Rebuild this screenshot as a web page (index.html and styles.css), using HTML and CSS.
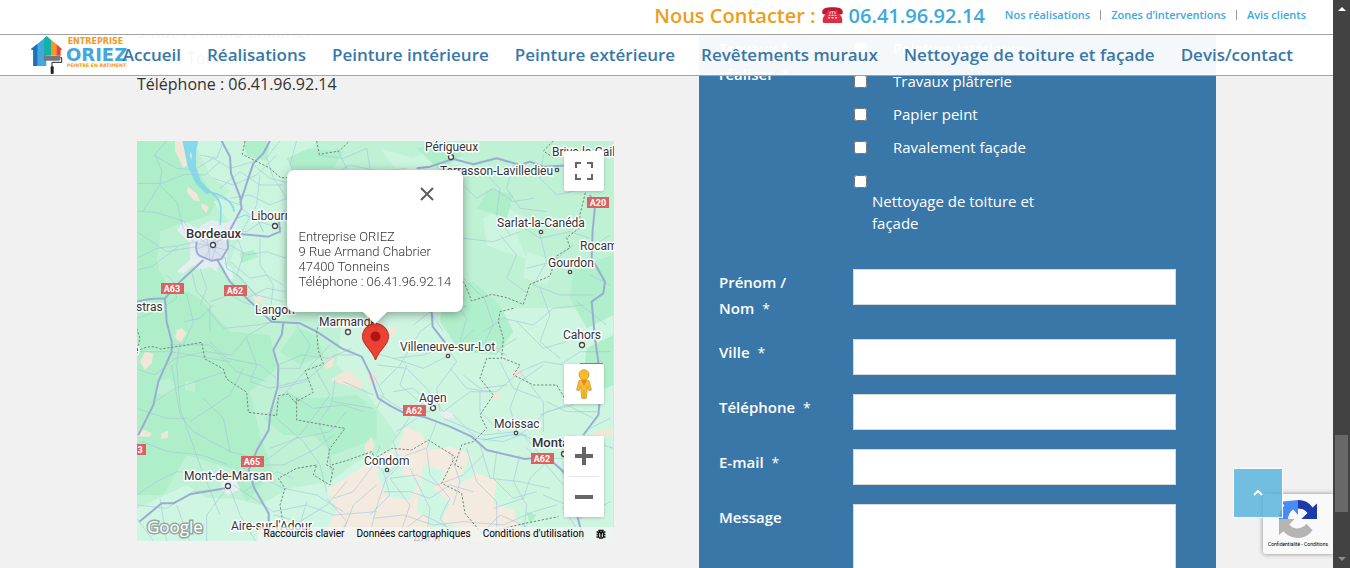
FILE: index.html
```html
<!DOCTYPE html>
<html lang="fr">
<head>
<meta charset="utf-8">
<meta name="viewport" content="width=device-width, initial-scale=1">
<title>Entreprise ORIEZ - Contact</title>
<link rel="stylesheet" href="styles.css">
</head>
<body>
<div class="page">
  <div class="view">
    <header class="header">
      <div class="topbar">
        <p class="contact"><span class="contact-label">Nous Contacter :</span>
          <svg class="phone-icon" viewBox="0 0 60 46" aria-hidden="true"><path fill="#be1931" d="M1 19C-2 6 8 1 30 1s32 5 29 18c-1 4-17 4-18-1v-4c-6-2-16-2-22 0v4c-1 5-17 5-18 1z"/><path fill="#dd2e44" d="M16 12c0-5 5-5 5 0v2h18v-2c0-5 5-5 5 0 1 6 14 13 14 24v5c0 5-2 5-6 5H8c-4 0-6 0-6-5v-5c0-11 13-18 14-24z"/><path fill="#f8dde0" d="M21 15h4v4h-4zm7 0h4v4h-4zm7 0h4v4h-4zm-16 7h5v4h-5zm8 0h6v4h-6zm9 0h5v4h-5zm-19 7h6v4h-6zm10 0h6v4h-6zm10 0h6v4h-6z"/></svg>
          <a class="contact-number" href="tel:0641969214">06.41.96.92.14</a></p>
        <nav class="quick" aria-label="Liens rapides"><a href="#">Nos réalisations</a><a href="#">Zones d’interventions</a><a href="#">Avis clients</a></nav>
      </div>
      <div class="mainbar">
        <a class="logo" href="#" aria-label="Entreprise ORIEZ">
          <svg viewBox="90 105 300 120" width="100" height="40">
            <path fill="#42a7df" d="M92 148l47-38v88H99v-48z"/><path fill="#1c73b4" d="M92 148l20-16v66H100v-48z"/>
            <path fill="#12b3a6" d="M132 115l8-7 13 11v48h-21z"/><path fill="#f39b18" d="M153 119l16 13v35h-16z"/><path fill="#e04a2d" d="M169 132l19 17h-6v18h-13z"/>
            <path fill="#777" d="M131 168h50v11l-3 3h-44l-3-3z"/><path fill="none" stroke="#26282a" stroke-width="3" d="M181 173h4v14h-29v14"/><rect x="152" y="199" width="9" height="23" rx="3" fill="#222"/>
            <text class="logo-top" x="203" y="132">ENTREPRISE</text><text class="logo-name" x="198" y="183">ORIEZ</text><text class="logo-sub" x="201" y="202">PEINTRE EN BATIMENT</text>
          </svg>
        </a>
        <nav class="menu" aria-label="Menu principal"><a href="#">Accueil</a><a href="#">Réalisations</a><a href="#">Peinture intérieure</a><a href="#">Peinture extérieure</a><a href="#">Revêtements muraux</a><a href="#">Nettoyage de toiture et façade</a><a href="#">Devis/contact</a></nav>
      </div>
    </header>

    <main class="content">
      <section class="info">
        <address>9 Rue Armand Chabrier<br>47400 Tonneins<br>Téléphone : 06.41.96.92.14</address>
        <div class="map">
          <svg class="tiles" viewBox="0 0 477 400" preserveAspectRatio="xMidYMid slice" aria-label="Carte">
            <rect width="477" height="400" fill="#bff1d5"/>
            <g transform="translate(-7 -6) scale(.33333)">
              <path fill="#aeefca" d="M20 18H160L205 110 260 195 240 240 150 270 95 290 80 380 130 440 220 500 300 590 420 600 440 700 360 770 390 900 430 1010 350 1100 300 1000 170 960 100 1080 20 1080z"/>
              <path fill="#ccf5df" d="M190 18H560L520 90 590 170 470 240 460 420 470 540 420 540 330 430 300 380 330 300 250 200 300 170 240 120z"/>
              <path fill="#bdf1d4" d="M90 290l60-25 30 35 20 60-50 60 30 50-50 5-45-70zM270 540l40-20 20 30-30 25zM80 740l40-10 20 30-30 20-35-5zM165 740l30 0v30l-30-5z"/>
              <path fill="#b0efcb" d="M330 355l40-10 15 20-50 20zM340 18l80 0-10 60-60-15zM470 70l70-30 100 10-30 50-120 10zM500 580l60 20 20 60-70 30-60-40z"/>
              <path fill="#cff6e2" d="M20 1120l150-70 60 40 80 0 80 20 90-50 120-20 80-60 100-40v950H20z"/>
              <path fill="#cdf5e0" d="M640 520H1450V1250H700L710 1060 800 900 700 760 620 690z"/>
              <path fill="#b0efcb" d="M560 790l120-10 60 50 0 80-130 50-60-60-90 0-60-50 60-70zM940 470l90-30 80 70 40 80-50 70-110-10-60-90zM1330 400l120-40v180l-80 40-50-90z"/>
              <path fill="#cbf5df" d="M1060 250l60-40 70 40-30 50 30 70-70-20-50-20zM750 40l100 30 80-40 100 60-70 60-150-30zM1190 350l90 30-30 70-70-20zM880 580l60 20 30 60-80 30-40-50z"/>
              <path fill="#aeefca" d="M860 40l90-22 50 40-70 50zM1080 160l70 20-20 70-90-30zM1370 640l80-40v150l-50 20-40-50zM1260 1400l40 0 10 60-40-20zM1190 1130l30 10-20 30z"/>
              <path fill="#b8f0d0" d="M550 220l190-30 50 40-40 80 60 40v150l-120 60-120-20z"/>
              <path fill="#f1e6d8" d="M135 18h25l15 70-15 10-25-50zM175 155l25 20 10 25-20-5-20-25zM215 205l20 10-5 20-15-15zM140 585l15-5 15 15-20 30-15-20zM45 650l25 5-5 30-20 20-15-25zM30 880l35 15-5 10h-35zM95 895l20-8-2 22-20 3zM370 480l25 5 10 15-30 5zM580 690l22-26 10 8-4 22-18 8zM610 728l38-22 24 14 26 20-2 24-50-14-44-14zM710 716l24-2 12 28-26 6zM770 590l24-20 10 14-36 34zM705 930l20-26 8 30-14 24-14-6zM1140 710l24-8 16 16-28 14zM1084 780l22-8 8 16-24 8zM1390 890l60-10v20l-60 5zM1380 1090l35-30 0 70z"/>
              <path fill="#f4ebe0" d="M745 965l60-25 20-65 50 20 25 50 60-10 60 20 20 60 60 20-10 70 60 20 20 50-30 60 80 60 10 50-80 20-50 60-90 0-80-60-80-30-60-70-40 30-60 80-20-80-60-40-20-70 30-60-30-60z"/>
              <path fill="#cff6e2" d="M790 950l50 20-30 45 60 20-30 60-70-10-30-70zM880 990l70 20-40 50 50 40-30 70-70-40zM1020 960l20 60-60 30zM900 1150l90 30-30 50-70-20z"/>
              <path fill="#e3edf0" d="M215 270l30-15 40 10 30-15 10 20-30 30-5 80-30 20 5 15-25-20-30 10-30-20 0-60-40-40 20-25 45 20z"/><path fill="#dbe2ee" d="M215 305l40-8 30 20 5 30-30 30-45-10-15-30z"/><path fill="#e8eff0" d="M180 375l40-10-60 50-20-5zM275 380l30 20 5 30-15 5zM275 1040l40-8 15 30-35 18-20-15zM770 455l20 5-15 20zM925 830l30 0 20 15-30 8z"/>
            </g>
            <g class="water" transform="translate(-7 -6) scale(.33333)"><path d="M160 18h42l-6 30 0 50 14 40 30 34-10 3-30-30-24-50z"/><path fill="none" d="M225 160q45 25 48 60l-2 50M235 170q70 15 78 60"/><path class="stream" d="M285 365l5 35 40 25 50 60M320 250l25-10 15 5 25 15 15 30M1060 915l80-15 50 0"/><path fill="#ccf5df" d="M180 40l8 20-3 25-8-20z"/></g>
            <g class="minor" transform="translate(-7 -6) scale(.33333)">
              <path d="M20 145l75 0 70-27 60 2 45-40M110 18l-35 40 20 50-5 40-50 80M20 228l60 5 80 25 45 60M70 60l70 40 60 5M90 150l50 50 20 80 30 40M20 370l60-30 65-8 55-12M20 290l90 60 90-15M145 335l-80 60-45 10M130 440l10 50-60 40-60 20M110 420l60 60 20 80-30 70M185 410l15 60 40 40 0 80M200 100l50-30 50 30 70-20M210 60l50 10 20-50M250 130l60 20 70-30 60-60M270 160l60-50 60 40 70 0M300 190l60-10 60 30 50-20M335 220l50 40 70 20M290 290l60 0 90-60M300 330l50 30 60-10 60 20M320 300l20 60-20 60 60 60 80 20M300 380l60 50 50-10 50 30M390 310l0 80 40 60-10 90M350 490l60-30 60 10M240 500l60-20 60 30M230 520l50 60 100-10 50-10M160 560l50-10 40-40"/>
              <path d="M330 210l-80-30-60-50M370 90l50 40 80 20 90-20M390 120l-10 90-45 80M450 18l-40 50 20 60 40 60 10 50M500 18l-20 70 40 80 60 20M560 60l80 10 70-30M590 130l70-40 90 20 80-10M620 40l30 60 0 80M710 40l10 60"/>
              <path d="M210 400l20 60-20 50M425 560l-70 40-50 60-80-10-90 20-60 50-60-20M500 570l40 60-30 70-60 0M350 610l30 80-20 50 60 20 120-30M240 620l50 50 100 20 50 40M120 630l120 0 80 80 90 30M20 650l100 0 180 30M150 620l-10 70 10 130 60 170 60 150M125 690l25 150 40 50 110 60 80 20M180 860l120-80 40-80M20 820l90 30 60 0M75 800l60-40 150-50M300 950l-20-100-60-60M35 920l80 30 100 10 80 30"/>
              <path d="M445 760l80-20 90-80 60 0M445 690l70-30 80 10 70-30M470 770l80 50 90-10 60 20M550 690l50 90-90 120-80 60-60 40M440 850l80 70 50 70 20 80M420 940l80-30 100-20 50-60M615 735l-10 70-40 60 30 70 10 80M640 740l90 40M610 800l120 20M440 800l160-170"/>
              <path d="M20 1080l60-40 60-30 150 10 80-30 90 0 100-50 50-40M20 1110l90 10 80-50 80-5M20 1150l60 80M90 1090l20 130M140 1110l40 110M290 1060l-60 80 0 80M300 1060l30 80 60 100M310 1050l120 80 100-20 80 30 130-10M400 1030l60 30 100 20 80 50M340 1070l100-60 50 20M430 1140l80 20 80-50 60-70M440 1180l110 0 90 20 80 0M590 1090l60 70-30 60M530 1100l-20 70 30 50M610 1090l60-20 60-80 20-60M700 950l60 60 20 70-60 60"/>
              <path d="M730 455l110 70 90-20 80 10M840 420l100 30 60-20 60 60M760 330l80 50 90-10 70-60 90 10 80-30M860 250l60 40 10 80 50 40 20 80M820 160l40 90-30 70M930 130l30 80-20 60 60 40M980 130l60 60 50-30 60 40 60-10M1050 100l60 60-10 80 40 60M1150 90l-20 70 40 60 80 10M1240 60l-10 70 50 50 90-20M1170 270l60 40 90-20 60 20M1110 300l50 60-30 70 70 50M1230 300l20 80-40 70 80 30 100 0M1330 330l-60 50-80 20M1380 420l60 30M1360 510l-90 10-60 50-90-20-60 40M1060 480l30 90-30 60 70 30M940 460l70 90-20 70M850 570l50-40 40 60M880 360l20 80 80 20M1380 340l60-40M760 230l60-50 50 20M1230 460l30 80-30 80 60 50M1340 500l90 70M1160 560l80 80 70-20"/>
              <path d="M720 650l70 20 90-10 80-30 80 20 70-10 50-30M740 690l90 10 60 60 50 70M750 750l60-60 60-100 40-30M790 670l90 30 70-35 80-80M930 830l-10-70 60-80-20-30M920 820l-70-60-60 10M940 830l80-60 80 0 70-60 70-30 60 10M940 850l120 50 100-10 60 30M970 840l70 70 80 10 50-20 80-70 80-20M1160 890l-20-70 30-80 70-50M1180 900l60 70 60 0M1050 770l0 60 60 60M1000 720l50 40 80-10M1250 800l60 30 90 0M1170 710l70 90 0 90M1290 690l60-40 90 0M1110 680l40 80 80 30M850 830l-60 90 20 70-40 40M860 850l-60 40M960 700l50 60 70 10M750 780l60 40 90 10M1350 750l70 40M1390 850l-80-40-80 30M730 720l30 60-20 40M830 690l-20 60 70 60"/>
              <path d="M770 1025l-30 90-20 80M770 1020l60-60 60-20 30-80M780 1030l80-10 60 30 80-30 60-60M780 1030l60 80-30 90M760 1070l80 0 60 20 60-40 70 20M890 940l10 80 60 70-30 60 60 80M960 950l30 90-20 70M1010 940l30 100 60 60 0 80M840 1000l60 120-10 80M1050 930l30 100 90 10 90 20M1100 950l-10 80 60 60 70-20M1170 960l-20 80 40 70-10 100M1190 940l50 40 60 70M1260 970l-60 60-20 60-90 30M1290 1000l30 60-20 60 40 60M730 1150l90-10 90 30 90-10 120 10 90-40 70-20M800 1200l80-60 120 60M1050 1200l60-60 90 40M1350 1150l90-50M1240 1080l70 30M740 1050l-70 60-30 80M1390 920l60 20M1380 880l60-30"/>
              <path d="M210 310l70 60M205 340l80-30M225 370l40-75M245 375l25-75M200 325l90 20M230 300l10 75"/>
            </g>
            <g class="major" transform="translate(-7 -6) scale(.33333)">
              <path d="M275 18l25 47 3 50 27 70 5 35-40 75M420 18l-20 37-30 30-40 120M330 297l85 8 35-15-5-50 20-12M200 320q-5 32 8 42l36 15 30-5 20-32-3-45M220 375l-70 65-45 50-45 2-40 8M105 490l5 70 15 60 0 30-40 90-15 70-45 90M262 375l38 65 50 50 75 70 85 5 50 25 75 50 60 25 25 50 25 75 40 25 40 20 55 10 80 30 65 30 45 40 115 27 65-7 45 40 40 40 5 90 20 80M460 565l-5 35-25 45 15 50-2 60-22 80-5 50-35 60-25 60 17 55 43 75 0 30M28 1160l67-55 35 0 50-27 105-18M860 100l40-5 70-23 60 16 70-18 70 20 30-10 40 15 90-5M1380 180l15 35-7 70-3 85 40 70-5 35-35 25 10 110 10 70-15 70M1410 790l-5 50-45 60M905 530l3 45 35 45 15 25M1360 1110l-50-130"/>
            </g>
            <g class="border" transform="translate(-7 -6) scale(.33333)">
              <path d="M345 18l-8 40 80 40 35 30 60 0M560 18l8 40 60-10 30-30M20 580l10 30-10 40M20 650q40-25 70-8l70-10 55-10 10 50 55 30 10 30 60 40 5 60 85 10 5-60 30-5 20 25 55-30-25-65 55-20-15-40-5-60 10-30M500 790l0 65 145 25-45 60-10 50 20 10-10 50-50-30 10-30-60 10-55 30 20 30-15 50 10 60M605 990l50-15 70-25 10 20 50-30 60 5 50-30 80 50-40 80 60 30 10 60 50 60 130-30 100-20M1270 18l-30 30 30 20 60-20 20 30 20 80-20 80 0 40-40 30 10 30-40 25-20 60-60 25-20 60-50-20-45-10-60 20-20-50-20-30M1150 520l-40 10-5 30 15 50-5 60-45 0-20 60 40 50-40 60 20 40-40 40-35 10-20 60 20 10M1120 670l50 20-20 30 60 30 70 0 30 50 70-10"/>
            </g>
            <g transform="translate(-137 -141)">
              <g class="town">
                <circle cx="213" cy="245" r="2.5"/><circle cx="275" cy="226" r="2.5"/><circle cx="348" cy="332" r="2.5"/><circle cx="451" cy="157" r="2.5"/><circle cx="582" cy="345" r="2.5"/><circle cx="433" cy="408" r="2.5"/><circle cx="228" cy="486" r="2.5"/><circle cx="564" cy="454" r="2.5"/>
                <circle cx="274" cy="318" r="1.7"/><circle cx="557" cy="170" r="1.7"/><circle cx="541" cy="232" r="1.7"/><circle cx="570" cy="272" r="1.7"/><circle cx="448" cy="356" r="1.7"/><circle cx="516" cy="433" r="1.7"/><circle cx="387" cy="470" r="1.7"/>
              </g>
              <g class="place">
                <text x="425" y="151">Périgueux</text><text x="552" y="156">Brive-la-Gaillarde</text><text x="440" y="175">Terrasson-Lavilledieu</text><text x="497" y="227">Sarlat-la-Canéda</text><text x="580" y="250">Rocamadour</text><text x="548" y="267">Gourdon</text><text x="563" y="339">Cahors</text><text x="400" y="351">Villeneuve-sur-Lot</text><text x="419" y="402">Agen</text><text x="494" y="428">Moissac</text><text x="364" y="465">Condom</text><text x="184" y="480">Mont-de-Marsan</text><text x="231" y="530">Aire-sur-l'Adour</text><text x="255" y="314">Langon</text><text x="319" y="326">Marmande</text><text x="251" y="220">Libourne</text><text x="136" y="311">stras</text><text x="132" y="354">e</text><text x="413" y="543">Auch</text>
                <text class="city" x="186" y="238">Bordeaux</text><text class="city" x="532" y="447">Montauban</text>
              </g>
              <g class="shield"><path d="M161 283h23v11h-23zM224 285h23v11h-23zM587 197h22v11h-22zM403 405h23v11h-23zM531 453h23v11h-23zM241 456h23v11h-23zM137 444h9v11h-9zM580 363h23v11h-23z"/>
                <text x="172" y="292">A63</text><text x="235" y="294">A62</text><text x="598" y="206">A20</text><text x="414" y="414">A62</text><text x="542" y="462">A62</text><text x="252" y="465">A65</text><text x="140" y="453">3</text></g>
              <text class="google" x="147" y="533">Google</text>
            </g>
          </svg>
          <svg class="pin" viewBox="0 0 27 38" width="27" height="38" aria-hidden="true"><path fill="#ea4335" stroke="#c5221f" d="M13.500.5C6.300.5.5 6.300.5 13.500c0 4.700 2.500 7.500 5.500 11.500 3.500 4.500 5.500 7 7.500 12 2-5 4-7.500 7.500-12 3-4 5.500-6.800 5.500-11.500C26.500 6.300 20.700.5 13.500.5z"/><circle cx="13.500" cy="13.500" r="5" fill="#b31412"/></svg>
          <div class="popup">
            <button class="close" type="button" aria-label="Fermer"><svg viewBox="0 0 14 14" width="14" height="14"><path d="M1 1l12 12M13 1L1 13" stroke="#5c5c5c" stroke-width="2"/></svg></button>
            <p>Entreprise ORIEZ<br>9 Rue Armand Chabrier<br>47400 Tonneins<br>Téléphone : 06.41.96.92.14</p>
          </div>
          <button class="control full" type="button" aria-label="Plein écran"><svg viewBox="0 0 18 18" width="18" height="18"><path fill="#666" d="M0 0v6h2V2h4V0zm18 0h-6v2h4v4h2zm0 18v-6h-2v4h-4v2zM2 12H0v6h6v-2H2z"/></svg></button>
          <div class="controls">
            <button class="control" type="button" aria-label="Street View"><svg viewBox="0 0 50 90" width="18" height="30"><path fill="#fbbc2c" stroke="#b98a25" stroke-width="2" d="M15 33h20q6 0 7 8l5 22-6 3-6-13-1 13-2 22H18l-2-22-1-13-6 13-6-3 5-22q1-8 7-8z"/><path fill="#e8812d" d="M16 34l9 16 9-16z"/><circle cx="25" cy="17" r="15" fill="#fbbc2c" stroke="#b98a25" stroke-width="2"/><path stroke="#b98a25" stroke-width="2" d="M25 63v25"/></svg></button>
            <div class="zoom">
              <button class="control" type="button" aria-label="Zoom avant"><svg viewBox="0 0 18 18" width="18" height="18"><path fill="#666" d="M7 0h4v7h7v4h-7v7H7v-7H0V7h7z"/></svg></button>
              <button class="control" type="button" aria-label="Zoom arrière"><svg viewBox="0 0 18 18" width="18" height="18"><path fill="#666" d="M0 7h18v4H0z"/></svg></button>
            </div>
          </div>
          <div class="credits"><button type="button">Raccourcis clavier</button><span>Données cartographiques</span><a href="#">Conditions d'utilisation</a><a href="#" aria-label="Signaler une erreur"><svg viewBox="0 0 10 10" width="10" height="10"><path fill="none" stroke="#111" stroke-width="1.300" d="M2.500 3.500h5v4l-1 1.500h-3l-1-1.500zM3.500 3V1.500h3V3M2.500 1l1 1M7.500 1l-1 1M.5 3h2M.5 5.500h2M.5 8h2M7.500 3h2M7.500 5.500h2M7.500 8h2M4 5h2M4 7h2"/></svg></a></div>
        </div>
      </section>

      <form class="form">
        <fieldset class="row works">
          <legend class="sr">Travaux à réaliser</legend>
          <div class="label" aria-hidden="true"><b>Travaux à réaliser</b> <span class="star">*</span></div>
          <div class="options">
            <label><input type="checkbox"><span>Peinture intérieure</span></label>
            <label><input type="checkbox"><span>Travaux plâtrerie</span></label>
            <label><input type="checkbox"><span>Papier peint</span></label>
            <label><input type="checkbox"><span>Ravalement façade</span></label>
            <label class="wrap"><input type="checkbox"><span>Nettoyage de toiture et façade</span></label>
          </div>
        </fieldset>
        <div class="row"><label class="label" for="nom"><b>Prénom / Nom</b> <span class="star">*</span></label><input class="field" id="nom" type="text"></div>
        <div class="row"><label class="label" for="ville"><b>Ville</b> <span class="star">*</span></label><input class="field" id="ville" type="text"></div>
        <div class="row"><label class="label" for="tel"><b>Téléphone</b> <span class="star">*</span></label><input class="field" id="tel" type="tel"></div>
        <div class="row"><label class="label" for="mail"><b>E-mail</b> <span class="star">*</span></label><input class="field" id="mail" type="email"></div>
        <div class="row"><label class="label" for="message"><b>Message</b></label><textarea class="field" id="message" rows="7"></textarea></div>
      </form>
    </main>

    <div class="captcha">
      <svg viewBox="0 0 112 112" width="38" height="38" aria-hidden="true"><path fill="#1c3aa9" d="M56 0q28 0 43 22l13-12v46H66l18-18q-10-13-28-13z"/><path fill="#4a8af4" d="M56 0v44L42 28Q29 36 26 56H0Q0 32 16 16L6 5z"/><path fill="#b4b4b4" d="M0 56h46L30 72q14 16 34 10 12-4 17-12l18 19Q82 112 56 112q-26 0-43-20L0 103z"/></svg>
      <p><a href="#">Confidentialité</a> - <a href="#">Conditions</a></p>
    </div>
    <button class="to-top" type="button" aria-label="Haut de page"><svg viewBox="0 0 10 6" width="10" height="6"><path fill="none" stroke="#fff" stroke-width="2" d="M1 5l4-4 4 4"/></svg></button>
  </div>
  <div class="scrollbar" aria-hidden="true"><span class="arrow up"></span><span class="thumb"></span><span class="arrow down"></span></div>
</div>
</body>
</html>
```

FILE: styles.css
```css
* { box-sizing: border-box; }
body { margin: 0; font: 16px/26px "Open Sans", sans-serif; color: #333; background: #f1f1f1; overflow: hidden; }
a { color: inherit; text-decoration: none; }
p { margin: 0; }
button { border: 0; padding: 0; font: inherit; color: inherit; cursor: pointer; }
svg { display: block; }
.page { display: flex; height: 100vh; }
.view { flex: 1; position: relative; overflow: hidden; }

.header { position: absolute; top: 0; left: 0; right: 0; z-index: 5; }
.topbar { display: flex; justify-content: flex-end; align-items: center; gap: 20px; height: 35px; padding: 0 27px 4px 0; background: #fff; border-bottom: 1px solid #a3a3a3; }
.contact { display: flex; align-items: center; gap: 6px; padding-top: 2px; font-size: 20px; font-weight: 600; color: #41a8db; }
.contact-label { color: #eb9e20; }
.phone-icon { width: 21px; height: 16px; margin-bottom: 2px; }
.quick { display: flex; font-size: 11px; line-height: 10px; font-weight: 600; color: #41a8db; }
.quick a + a { margin-left: 10px; padding-left: 10px; border-left: 1px solid #999; }
.mainbar { position: relative; display: flex; justify-content: flex-end; align-items: center; height: 41px; padding-right: 40px; background: rgba(255, 255, 255, .95); border-bottom: 1px solid #a3a3a3; }
.logo { position: absolute; left: 30px; top: 0; }
.logo text { font-family: "DejaVu Sans", sans-serif; font-weight: 700; }
.logo-top { font-size: 24px; fill: #f39b18; }
.logo-name { font-size: 54px; fill: #42a7df; }
.logo-sub { font-size: 14px; fill: #f39b18; }
.menu { position: relative; display: flex; gap: 26px; font-size: 17px; font-weight: 600; color: #3977a8; white-space: nowrap; }

.content { display: grid; grid-template-columns: 477fr 517fr; gap: 85px; padding: 0 117px 0 137px; }
.info { padding-top: 19px; }
.info address { font-style: normal; margin-bottom: 44px; }
.map { position: relative; height: 400px; overflow: hidden; font-family: Roboto, sans-serif; }
.tiles { width: 100%; height: 100%; }
.water { fill: #86d9eb; stroke: #86d9eb; stroke-width: 5; }
.water .stream { fill: none; stroke-width: 3; }
.minor { fill: none; stroke: #a5bfd9; stroke-width: 2; stroke-linejoin: round; opacity: .85; }
.major { fill: none; stroke: #99add3; stroke-width: 6; stroke-linejoin: round; }
.border { fill: none; stroke: #71877c; stroke-width: 3; stroke-dasharray: 7 5; }
.town { fill: #fff; stroke: #444; stroke-width: 1.3; }
.place { font-size: 12px; fill: #303438; stroke: #fff; stroke-width: 3; paint-order: stroke; stroke-linejoin: round; }
.place .city { font-size: 13px; font-weight: 500; }
.shield { fill: #dc6262; font-size: 9px; font-weight: 700; text-anchor: middle; }
.shield text { fill: #fff; }
.google { font: 500 17px "Open Sans", sans-serif; fill: #fff; stroke: #94a89d; stroke-width: 3; paint-order: stroke; }
.pin { position: absolute; left: 50%; top: 182px; margin-left: -14px; }
.popup { position: absolute; left: 50%; top: 29px; margin-left: -89px; width: 176px; height: 142px; padding: 59px 12px 0; background: #fff; border-radius: 8px; font-size: 13px; line-height: 15px; font-weight: 300; filter: drop-shadow(0 2px 5px rgba(0, 0, 0, .35)); white-space: nowrap; }
.popup::after { content: ""; position: absolute; left: 50%; top: 100%; margin-left: -12px; border: 12px solid transparent; border-top-color: #fff; border-bottom: 0; }
.close { position: absolute; right: 29px; top: 17px; background: none; }
.control { display: grid; place-items: center; width: 40px; height: 40px; background: #fff; border-radius: 2px; box-shadow: 0 1px 4px -1px rgba(0, 0, 0, .3); }
.full { position: absolute; right: 10px; top: 10px; }
.controls { position: absolute; right: 10px; bottom: 24px; display: grid; gap: 32px; }
.zoom { background: #fff; border-radius: 2px; box-shadow: 0 1px 4px -1px rgba(0, 0, 0, .3); }
.zoom .control { box-shadow: none; }
.zoom .control + .control { position: relative; margin-top: 1px; }
.zoom .control + .control::before { content: ""; position: absolute; top: -1px; left: 5px; right: 5px; border-top: 1px solid #e6e6e6; }
.credits { position: absolute; right: 0; bottom: 0; display: flex; align-items: center; gap: 12px; height: 14px; padding: 0 8px 0 6px; background: rgba(245, 245, 245, .75); font-size: 10px; line-height: 14px; color: #000; white-space: nowrap; }
.credits button { background: none; }

.form { min-height: 100vh; padding: 32px 40px 20px 20px; background: #3977a8; color: #fff; font-size: 15px; display: flex; flex-direction: column; gap: 18px; }
.row { display: grid; grid-template-columns: 134px 1fr; align-items: start; min-height: 37px; }
.label { padding-right: 40px; }
.label b { font-weight: 600; margin-right: 4px; }
.star { font-size: 14px; line-height: 14px; }
.row:not(:nth-child(2)):not(.works) .label { padding-right: 0; }
.works { border: 0; margin: 0 0 17px; padding: 0; }
.works .label { padding-top: 3px; }
.sr { position: absolute; width: 1px; height: 1px; overflow: hidden; clip-path: inset(50%); }
.options label { display: flex; align-items: center; gap: 26px; height: 33px; }
.options span { padding-bottom: 2px; }
.options input { margin: 0 0 0 1px; width: 13px; height: 13px; flex: none; }
.options .wrap { display: block; height: auto; padding-top: 11px; }
.wrap input { display: block; }
.options .wrap span { display: block; margin: 2px 100px 0 19px; padding: 0; line-height: 22px; }
.field { width: 100%; height: 36px; border: 1px solid #d8d8d8; background: #fff; margin: 0; padding: 4px 8px; font: inherit; resize: none; }
textarea.field { height: 160px; }

.captcha { position: absolute; right: 0; bottom: 14px; width: 70px; height: 60px; padding-top: 6px; background: #f9f9f9; border-radius: 3px 0 0 3px; box-shadow: 0 0 5px #888; display: grid; justify-items: center; align-content: start; font: 5px/12px Roboto, sans-serif; color: #000; }
.to-top { position: absolute; right: 50px; bottom: 50px; width: 50px; height: 50px; display: grid; place-items: center; border: 1px solid #fff; background: rgba(84, 178, 220, .82); }
.scrollbar { width: 17px; flex: none; background: #424242; display: grid; grid-template-rows: 17px 418px 77px 1fr; justify-items: center; }
.thumb { grid-row: 3; width: 13px; background: #686868; }
.arrow { border: 4px solid transparent; }
.up { align-self: center; border-top: 0; border-bottom-color: #fff; }
.down { grid-row: 4; align-self: end; margin-bottom: 7px; border-bottom: 0; border-top-color: #8b8b8b; }
```
